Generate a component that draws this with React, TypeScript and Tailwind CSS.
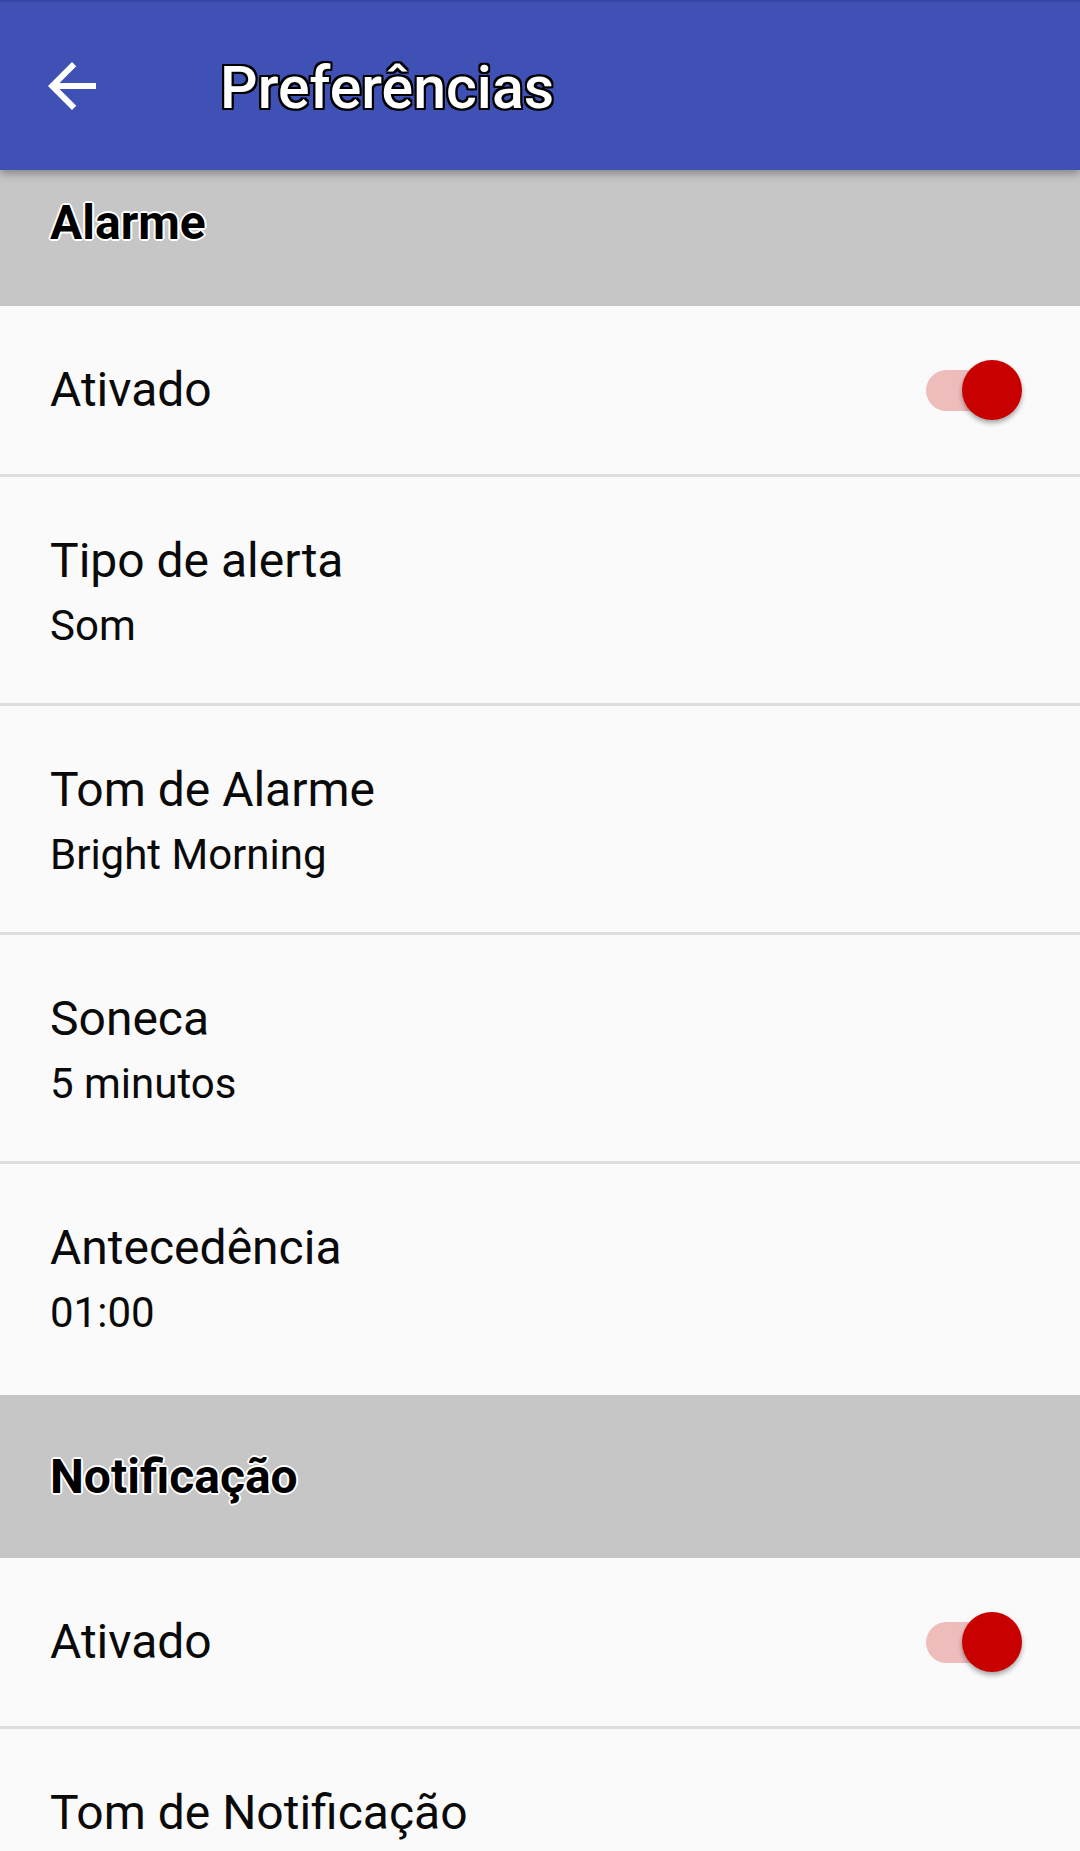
import React from 'react';

const outlineWhite =
  '[text-shadow:2px_0_0_#000,-2px_0_0_#000,0_2px_0_#000,0_-2px_0_#000,2px_2px_0_#000,-2px_-2px_0_#000,2px_-2px_0_#000,-2px_2px_0_#000]';

const Toggle: React.FC = () => (
  <div className="relative w-[96px] h-[60px] mr-[58px] shrink-0">
    <div className="absolute left-0 top-[10px] w-[86px] h-[41px] rounded-full bg-[#efbcbc]" />
    <div className="absolute right-0 top-0 w-[60px] h-[60px] rounded-full bg-[#c80000] shadow-[0_3px_5px_rgba(0,0,0,0.35)]" />
  </div>
);

const SwitchRow: React.FC<{ label: string }> = ({ label }) => (
  <div className="flex items-center justify-between h-[171px] pl-[50px] border-b-[3px] border-[#dddddd]">
    <span className="text-[48px] leading-[56px] text-[#0a0a0a]">{label}</span>
    <Toggle />
  </div>
);

const ValueRow: React.FC<{ label: string; value?: string; last?: boolean }> = ({ label, value, last }) => (
  <div className={`flex flex-col pl-[50px] pt-[56px] ${last ? 'pb-[58px]' : 'pb-[53px] border-b-[3px] border-[#dddddd]'}`}>
    <span className="text-[48px] leading-[56px] text-[#0a0a0a]">{label}</span>
    {value && <span className="mt-[12px] text-[42px] leading-[49px] text-[#0a0a0a]">{value}</span>}
  </div>
);

const SectionHeader: React.FC<{ title: string; first?: boolean }> = ({ title, first }) => (
  <div
    className={`flex pl-[50px] bg-[#c6c6c6] ${first ? 'h-[136px] pt-[25px] items-start' : 'h-[163px] items-center'}`}
  >
    <span className="text-[48px] leading-[56px] font-bold text-black [text-shadow:2px_0_0_#fff,-2px_0_0_#fff,0_2px_0_#fff,0_-2px_0_#fff,1px_1px_0_#fff,-1px_-1px_0_#fff,1px_-1px_0_#fff,-1px_1px_0_#fff]">
      {title}
    </span>
  </div>
);

export default function App() {
  return (
    <div className="w-[1080px] h-[1851px] overflow-hidden bg-[#fafafa] font-['Roboto',sans-serif]">
      <header className="relative z-10 h-[170px] flex items-center bg-[#3f51b5] border-t-2 border-[#3446a8] shadow-[0_4px_8px_rgba(0,0,0,0.3)]">
        <svg viewBox="0 0 24 24" className="w-[72px] h-[72px] ml-[36px] shrink-0" fill="#ffffff">
          <path d="M20 11H7.83l5.59-5.59L12 4l-8 8 8 8 1.41-1.41L7.83 13H20v-2z" />
        </svg>
        <h1 className={`ml-[112px] mt-[4px] text-[59px] leading-[70px] font-medium text-white ${outlineWhite}`}>
          Preferências
        </h1>
      </header>
      <SectionHeader title="Alarme" first />
      <SwitchRow label="Ativado" />
      <ValueRow label="Tipo de alerta" value="Som" />
      <ValueRow label="Tom de Alarme" value="Bright Morning" />
      <ValueRow label="Soneca" value="5 minutos" />
      <ValueRow label="Antecedência" value="01:00" last />
      <SectionHeader title="Notificação" />
      <SwitchRow label="Ativado" />
      <ValueRow label="Tom de Notificação" last />
    </div>
  );
}
